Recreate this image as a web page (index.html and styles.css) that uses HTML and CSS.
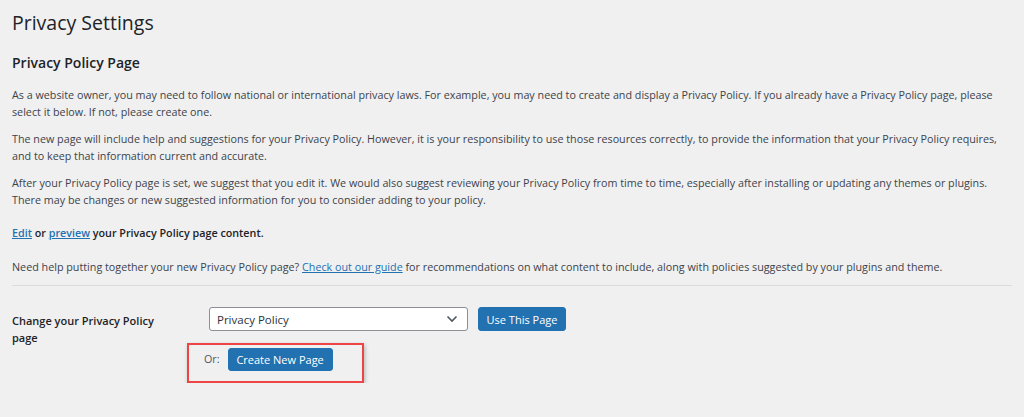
FILE: index.html
```html
<!DOCTYPE html>
<html lang="en">
<head>
<meta charset="utf-8">
<title>Privacy Settings</title>
<link rel="stylesheet" href="styles.css">
</head>
<body>
<div class="wrap">
  <h1 class="title">Privacy Settings</h1>
  <h2 class="subtitle">Privacy Policy Page</h2>
  <p class="text first">As a website owner, you may need to follow national or international privacy laws. For example, you may need to create and display a Privacy Policy. If you already have a Privacy Policy page, please select it below. If not, please create one.</p>
  <p class="text">The new page will include help and suggestions for your Privacy Policy. However, it is your responsibility to use those resources correctly, to provide the information that your Privacy Policy requires, and to keep that information current and accurate.</p>
  <p class="text">After your Privacy Policy page is set, we suggest that you edit it. We would also suggest reviewing your Privacy Policy from time to time, especially after installing or updating any themes or plugins. There may be changes or new suggested information for you to consider adding to your policy.</p>
  <p class="text strong"><a href="#" class="link">Edit</a> or <a href="#" class="link">preview</a> your Privacy Policy page content.</p>
  <p class="text last">Need help putting together your new Privacy Policy page? <a href="#" class="link">Check out our guide</a> for recommendations on what content to include, along with policies suggested by your plugins and theme.</p>
  <hr class="sep">
  <div class="form-row">
    <div class="label">Change your Privacy Policy page</div>
    <div class="field">
      <div class="controls">
        <div class="select">
          <span class="select-value">Privacy Policy</span>
          <svg class="chevron" width="12" height="8" viewBox="0 0 12 8"><path d="M1.5 1.5 L6 6 L10.5 1.5" fill="none" stroke="#50575e" stroke-width="1.6"/></svg>
        </div>
        <button class="btn btn-use">Use This Page</button>
      </div>
      <div class="highlight">
        <span class="or">Or:</span>
        <button class="btn btn-create">Create New Page</button>
      </div>
    </div>
  </div>
</div>
</body>
</html>
```
FILE: styles.css
```css
html, body {
  margin: 0;
  padding: 0;
  background: #f0f0f1;
}
body {
  font-family: "Open Sans", "Noto Sans", sans-serif;
  color: #3c434a;
  font-size: 10.75px;
}
.wrap {
  padding: 10px 12px 0 12px;
  width: 1000px;
}
.title {
  font-size: 19.5px;
  font-weight: 400;
  line-height: 25px;
  margin: 0;
  color: #1d2327;
}
.subtitle {
  font-size: 14px;
  font-weight: 600;
  line-height: 18px;
  margin: 19px 0 0 0;
  color: #1d2327;
}
.text {
  margin: 11px 0 0 0;
  line-height: 16.5px;
}
.text.first {
  margin-top: 15px;
}
.strong {
  font-weight: 600;
  color: #1d2327;
  margin-top: 17px;
}
.text.last {
  margin-top: 17px;
}
.link {
  color: #2271b1;
  text-decoration: underline;
}
.sep {
  border: 0;
  border-top: 1px solid #dcdcde;
  margin: 10px 0 0 0;
}
.form-row {
  display: flex;
  padding-top: 21px;
}
.label {
  width: 160px;
  margin-right: 37px;
  padding-top: 5px;
  font-weight: 600;
  font-size: 11px;
  line-height: 17px;
  color: #1d2327;
}
.field {
  display: flex;
  flex-direction: column;
}
.controls {
  display: flex;
  gap: 10px;
}
.select {
  height: 22px;
  width: 241px;
  border: 1px solid #8c8f94;
  border-radius: 3px;
  background: #fff;
  display: flex;
  align-items: center;
  justify-content: space-between;
  padding: 0 9px 0 7px;
}
.select-value {
  color: #2c3338;
  font-size: 11.5px;
}
.btn {
  font-family: inherit;
  font-size: 11px;
  background: #2271b1;
  color: #fff;
  border: 1px solid #2271b1;
  border-radius: 3px;
  height: 24px;
  padding: 0;
  cursor: pointer;
}
.btn-use {
  width: 88px;
}
.highlight {
  display: flex;
  align-items: flex-start;
  margin: 12px 0 0 -22px;
  width: 177px;
  height: 40px;
  border: 2px solid #ef4444;
  box-shadow: 1px 2px 4px rgba(0,0,0,0.25);
  padding-top: 3px;
  box-sizing: border-box;
}
.or {
  margin-left: 15px;
  margin-right: 8px;
  line-height: 23px;
  color: #50575e;
}
.btn-create {
  height: 23px;
  width: 105px;
}
```
